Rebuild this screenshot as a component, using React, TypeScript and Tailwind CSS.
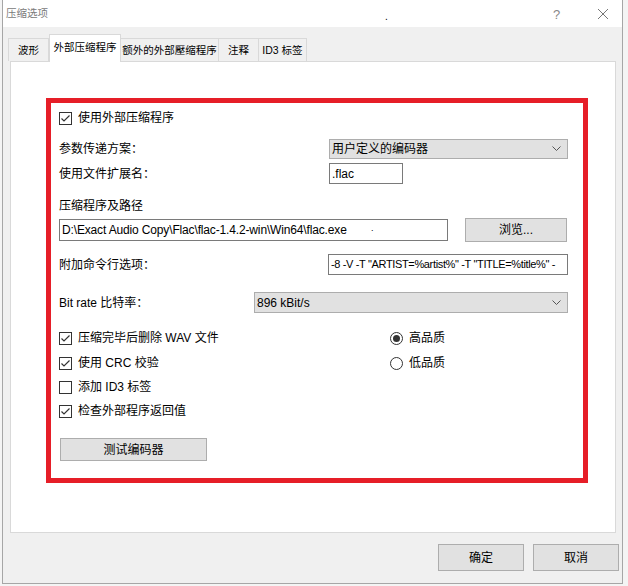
import React from "react";

const font = { fontFamily: '"Liberation Sans", "Noto Sans CJK SC", sans-serif' };

function Check({ checked }: { checked: boolean }) {
  return (
    <div className="w-[13px] h-[13px] border border-[#333333] bg-white flex items-center justify-center shrink-0">
      {checked && (
        <svg width="11" height="11" viewBox="0 0 11 11">
          <polyline points="1.5,5.5 4,8 9.5,2.5" fill="none" stroke="#333333" strokeWidth="1.2" />
        </svg>
      )}
    </div>
  );
}

function Radio({ on }: { on: boolean }) {
  return (
    <div className="w-[13px] h-[13px] rounded-full border border-[#333333] bg-white flex items-center justify-center shrink-0">
      {on && <div className="w-[7px] h-[7px] rounded-full bg-[#333333]" />}
    </div>
  );
}

function Chevron() {
  return (
    <svg width="9" height="6" viewBox="0 0 9 6" className="shrink-0">
      <polyline points="0.5,0.5 4.5,4.5 8.5,0.5" fill="none" stroke="#555555" strokeWidth="1" />
    </svg>
  );
}

function CheckRow({ checked, label }: { checked: boolean; label: string }) {
  return (
    <div className="flex items-center h-[16px] gap-[6px]">
      <Check checked={checked} />
      <span className="text-[12px] text-black leading-none">{label}</span>
    </div>
  );
}

export default function App() {
  return (
    <div className="w-[628px] h-[586px] bg-[#f4f4f4] overflow-hidden" style={font}>
      <div className="ml-[2px] w-[621px] h-[584px] border-l border-r border-b border-[#a6a6a6] bg-[#f0f0f0] flex flex-col">
        {/* Title bar */}
        <div className="h-[27px] bg-white flex items-center relative shrink-0">
          <span className="ml-[3px] text-[10.5px] text-[#7a7a7a]">压缩选项</span>
          <span className="absolute left-[382px] top-[9px] text-[10px] text-black">.</span>
          <span className="absolute left-[550px] top-[5px] text-[13px] text-[#888888] font-light">?</span>
          <svg className="absolute left-[594px] top-[8px]" width="12" height="12" viewBox="0 0 12 12">
            <path d="M1 1 L11 11 M11 1 L1 11" stroke="#777777" strokeWidth="1" />
          </svg>
        </div>

        {/* Tabs */}
        <div className="h-[34px] flex items-end ml-[5px] relative z-10 shrink-0">
          <div className="w-[41px] h-[23px] border border-b-0 border-[#d9d9d9] bg-[#f0f0f0] flex items-center justify-center text-[10.5px] text-black pt-[1px]">波形</div>
          <div className="w-[72px] border border-b-0 border-[#d9d9d9] bg-white -mb-[1px] h-[28px] flex items-center justify-center text-[10.5px] text-black pb-[2px]">外部压缩程序</div>
          <div className="w-[98px] h-[23px] border border-b-0 border-l-0 border-[#d9d9d9] bg-[#f0f0f0] flex items-center justify-center text-[10.5px] text-black pt-[1px]">额外的外部壓缩程序</div>
          <div className="w-[40px] h-[23px] border border-b-0 border-l-0 border-[#d9d9d9] bg-[#f0f0f0] flex items-center justify-center text-[10.5px] text-black pt-[1px]">注释</div>
          <div className="w-[48px] h-[23px] border border-b-0 border-l-0 border-[#d9d9d9] bg-[#f0f0f0] flex items-center justify-center text-[10.5px] text-black pt-[1px]">ID3 标签</div>
        </div>

        {/* Panel */}
        <div className="ml-[7px] w-[606px] h-[472px] bg-white border border-[#d9d9d9] shrink-0">
          <div className="mt-[36px] ml-[35px] w-[542px] h-[385px] border-[5px] border-[#e61e28] flex flex-col pl-[8px] pr-[15px]">
            <div className="mt-[7px]">
              <CheckRow checked={true} label="使用外部压缩程序" />
            </div>

            <div className="mt-[13px] h-[20px] flex items-center">
              <span className="w-[270px] text-[12px] text-black">参数传递方案：</span>
              <div className="flex-1 h-[20px] bg-[#e1e1e1] border border-[#adadad] flex items-center justify-between pl-[2px] pr-[6px]">
                <span className="text-[12px] text-black">用户定义的编码器</span>
                <Chevron />
              </div>
            </div>

            <div className="mt-[4px] h-[21px] flex items-center">
              <span className="w-[270px] text-[12px] text-black">使用文件扩展名：</span>
              <div className="w-[74px] h-[21px] border border-[#7a7a7a] bg-white flex items-center pl-[2px]">
                <span className="text-[12px] text-black">.flac</span>
              </div>
            </div>

            <div className="mt-[14px] h-[16px] flex items-center">
              <span className="text-[12px] text-black">压缩程序及路径</span>
            </div>

            <div className="mt-[4px] h-[24px] flex items-center gap-[17px]">
              <div className="w-[389px] h-[22px] border border-[#7a7a7a] bg-white flex items-center pl-[2px] relative">
                <span className="text-[12px] text-black whitespace-nowrap tracking-[-0.15px]">D:\Exact Audio Copy\Flac\flac-1.4.2-win\Win64\flac.exe</span>
                <span className="absolute left-[311px] top-[2px] text-[9px] text-black">.</span>
              </div>
              <div className="w-[102px] h-[24px] bg-[#e1e1e1] border border-[#adadad] flex items-center justify-center">
                <span className="text-[12px] text-black">浏览...</span>
              </div>
            </div>

            <div className="mt-[12px] h-[21px] flex items-center">
              <span className="w-[269px] text-[12px] text-black">附加命令行选项：</span>
              <div className="flex-1 h-[21px] border border-[#7a7a7a] bg-white flex items-center pl-[2px] overflow-hidden">
                <span className="text-[11px] text-black whitespace-nowrap tracking-[-0.35px]">-8 -V -T "ARTIST=%artist%" -T "TITLE=%title%" -</span>
              </div>
            </div>

            <div className="mt-[17px] h-[21px] flex items-center">
              <span className="w-[195px] text-[12px] text-black">Bit rate 比特率：</span>
              <div className="flex-1 h-[21px] bg-[#e1e1e1] border border-[#adadad] flex items-center justify-between pl-[2px] pr-[6px]">
                <span className="text-[12px] text-black">896 kBit/s</span>
                <Chevron />
              </div>
            </div>

            <div className="mt-[17px] grid grid-cols-[331px_1fr] gap-y-[9px]">
              <CheckRow checked={true} label="压缩完毕后删除 WAV 文件" />
              <div className="flex items-center h-[16px] gap-[6px]">
                <Radio on={true} />
                <span className="text-[12px] text-black leading-none">高品质</span>
              </div>
              <CheckRow checked={true} label="使用 CRC 校验" />
              <div className="flex items-center h-[16px] gap-[6px]">
                <Radio on={false} />
                <span className="text-[12px] text-black leading-none">低品质</span>
              </div>
            </div>
            <div className="mt-[8px] flex flex-col gap-[8px]">
              <CheckRow checked={false} label="添加 ID3 标签" />
              <CheckRow checked={true} label="检查外部程序返回值" />
            </div>

            <div className="mt-[19px] ml-[1px] w-[147px] h-[23px] bg-[#e1e1e1] border border-[#adadad] flex items-center justify-center">
              <span className="text-[12px] text-black">测试编码器</span>
            </div>
          </div>
        </div>

        {/* Bottom buttons */}
        <div className="mt-[11px] flex justify-end gap-[9px] pr-[3px]">
          <div className="w-[86px] h-[27px] bg-[#e1e1e1] border border-[#adadad] flex items-center justify-center">
            <span className="text-[12px] text-black">确定</span>
          </div>
          <div className="w-[86px] h-[27px] bg-[#e1e1e1] border border-[#adadad] flex items-center justify-center">
            <span className="text-[12px] text-black">取消</span>
          </div>
        </div>
      </div>
    </div>
  );
}
